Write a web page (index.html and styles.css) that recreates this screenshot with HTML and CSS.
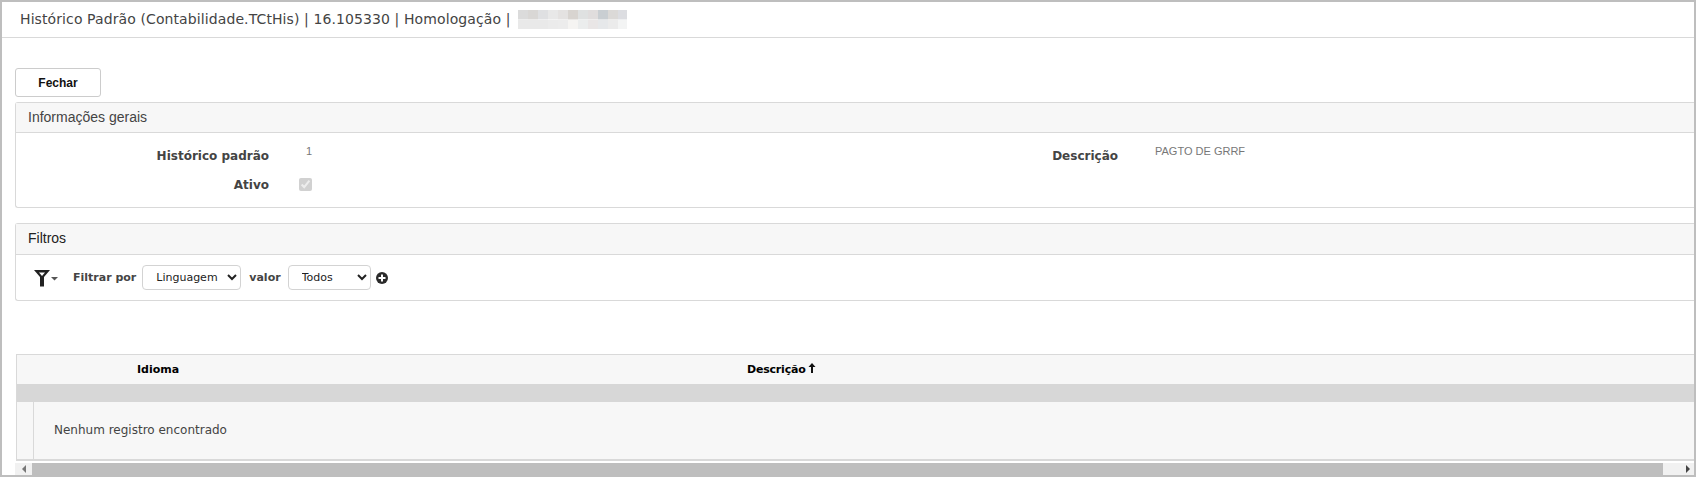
FILE: index.html
```html
<!DOCTYPE html>
<html lang="pt-BR">
<head>
<meta charset="utf-8">
<title>Histórico Padrão</title>
<link rel="stylesheet" href="styles.css">
</head>
<body>
<div class="frame">
  <header class="title-bar">
    <span class="title-text">Histórico Padrão (Contabilidade.TCtHis) | 16.105330 | Homologação |</span>
    <span class="blur" aria-hidden="true"></span>
  </header>
  <div class="actions"><button class="btn" type="button">Fechar</button></div>

  <section class="panel panel-info">
    <h2 class="panel-head">Informações gerais</h2>
    <div class="info-grid">
      <div class="label">Histórico padrão</div>
      <div class="value">1</div>
      <div class="label">Descrição</div>
      <div class="value">PAGTO DE GRRF</div>
      <div class="label label-ativo">Ativo</div>
      <div class="value value-check"><input class="check" type="checkbox" checked disabled></div>
    </div>
  </section>

  <section class="panel panel-filter">
    <h2 class="panel-head panel-head-dark">Filtros</h2>
    <div class="filter-row">
      <svg class="funnel" width="25" height="18" viewBox="0 0 25 18">
        <path d="M0 1h16l-6 7v9.500H6V8z M5 3.500l3 3.500 3-3.500z" fill="#222" fill-rule="evenodd"/>
        <path d="M17 8h7l-3.500 3.500z" fill="#555"/>
      </svg>
      <span class="filter-label">Filtrar por</span>
      <select class="sel sel-lang"><option>Linguagem</option></select>
      <span class="filter-label">valor</span>
      <select class="sel sel-val"><option>Todos</option></select>
      <svg class="plus" width="12" height="12" viewBox="0 0 12 12">
        <circle cx="6" cy="6" r="6" fill="#2b2b2b"/>
        <path d="M5 2.500h2V5h2.500v2H7v2.500H5V7H2.500V5H5z" fill="#fff"/>
      </svg>
    </div>
  </section>

  <section class="grid-table">
    <div class="grid-head">
      <span class="col col-idioma">Idioma</span>
      <span class="col col-desc">Descrição<svg class="arrow" width="8" height="10" viewBox="0 0 8 10"><path d="M3 10V4H0.500L4 0l3.500 4H5v6z" fill="#111"/></svg></span>
    </div>
    <div class="grid-band"></div>
    <div class="grid-row">
      <div class="grid-gutter"></div>
      <div class="grid-empty">Nenhum registro encontrado</div>
    </div>
  </section>

  <div class="hscroll">
    <div class="sb-btn sb-left"><span class="tri tri-left"></span></div>
    <div class="sb-thumb"></div>
    <div class="sb-btn sb-right"><span class="tri tri-right"></span></div>
  </div>
</div>
</body>
</html>
```
FILE: styles.css
```css
* { box-sizing: border-box; }
html, body { margin: 0; padding: 0; background: #fff; }
.frame {
  width: 1696px;
  height: 477px;
  border: 2px solid #bebebe;
  overflow: hidden;
  display: flex;
  flex-direction: column;
  background: #fff;
}
.title-bar {
  height: 36px;
  flex: none;
  border-bottom: 1px solid #d9d9d9;
  display: flex;
  align-items: center;
  padding: 0 0 0 18px;
  gap: 7px;
  font: 14px "DejaVu Sans", sans-serif;
  letter-spacing: 0.1px;
  color: #444;
}
.title-text { white-space: nowrap; position: relative; top: -1px; }
.blur {
  width: 109px;
  height: 19px;
  flex: none;
  background:
    linear-gradient(90deg, #dbdbdb 0 10px, #d9d7d5 10px 20px, #dfe0e2 20px 30px, #e8e8e8 30px 40px, #e4e2e1 40px 50px, #d8d4d0 50px 60px, #dfe1e1 60px 70px, #e0dddd 70px 80px, #c9ced2 80px 90px, #dbd9d7 90px 100px, #dcdde1 100px 109px) top / 100% 50% no-repeat,
    linear-gradient(90deg, #e9e9e9 0 30px, #ebebeb 30px 40px, #ececec 40px 50px, #f5f4f2 50px 60px, #ebeded 60px 70px, #e9e6e6 70px 80px, #e6e8ea 80px 90px, #ebebeb 90px 100px, #f3f4f4 100px 109px) bottom / 100% 50% no-repeat;
}
.actions { padding: 30px 0 0 13px; height: 64px; flex: none; }
.btn {
  display: block;
  width: 86px;
  height: 29px;
  padding: 0;
  background: #fff;
  border: 1px solid #ccc;
  border-radius: 3px;
  font: bold 12px "Liberation Sans", sans-serif;
  color: #111;
}
.panel {
  margin-left: 13px;
  flex: none;
  border: 1px solid #d9d9d9;
  border-right: 0;
  border-radius: 3px 0 0 3px;
}
.panel-info { height: 106px; }
.panel-filter { height: 78px; margin-top: 15px; }
.panel-head {
  margin: 0;
  height: 30px;
  padding: 0 12px;
  background: #f7f7f7;
  border-bottom: 1px solid #d9d9d9;
  font: normal 14px/29px "Liberation Sans", sans-serif;
  color: #444;
}
.panel-head-dark { height: 31px; line-height: 28px; color: #222; }
.info-grid {
  display: grid;
  grid-template-columns: 253px 761px 88px 1fr;
  grid-auto-rows: 30px;
  padding-top: 8px;
}
.label {
  font: bold 12px/30px "DejaVu Sans", sans-serif;
  color: #444;
  text-align: right;
  white-space: nowrap;
}
.label-ativo { line-height: 28px; }
.value {
  font: 11px/16px "Liberation Sans", sans-serif;
  color: #777;
  padding: 2px 0 0 37px;
  white-space: nowrap;
}
.value-check { padding: 7px 0 0 30px; }
.check { display: block; margin: 0; width: 13px; height: 13px; }
.filter-row {
  display: flex;
  align-items: center;
  height: 45px;
  padding: 0 0 0 18px;
}
.funnel { flex: none; margin-right: 14px; }
.filter-label {
  font: bold 11px "DejaVu Sans", sans-serif;
  color: #444;
  white-space: nowrap;
}
.sel {
  height: 25px;
  margin: 0 7px 0 6px;
  padding: 0 0 0 9px;
  background-color: #fff;
  border: 1px solid #d3d3d3;
  border-radius: 4px;
  font: 11px "DejaVu Sans", sans-serif;
  color: #222;
}
.sel-lang { width: 99px; margin-right: 8px; }
.sel-val { width: 83px; margin: 0 5px 0 7px; }
.plus { flex: none; }
.grid-table {
  margin: 53px 0 0 14px;
  flex: none;
  height: 107px;
  border-top: 1px solid #d9d9d9;
  border-left: 1px solid #d9d9d9;
  border-bottom: 2px solid #d9d9d9;
  display: flex;
  flex-direction: column;
}
.grid-head {
  height: 29px;
  flex: none;
  background: #f7f7f7;
  position: relative;
  font: bold 11px/30px "DejaVu Sans", sans-serif;
  color: #000;
}
.col { position: absolute; top: 0; white-space: nowrap; }
.col-idioma { left: 120px; }
.col-desc { left: 730px; letter-spacing: -0.2px; }
.arrow { vertical-align: 0; margin-left: 2px; }
.grid-band { height: 18px; flex: none; background: #d7d7d7; }
.grid-row { flex: 1; display: flex; background: #f7f7f7; }
.grid-gutter { width: 17px; flex: none; border-right: 1px solid #d9d9d9; }
.grid-empty {
  padding-left: 20px;
  font: 12px/56px "DejaVu Sans", sans-serif;
  color: #444;
  white-space: nowrap;
}
.hscroll {
  margin: 2px 0 0 13px;
  height: 12px;
  flex: none;
  display: flex;
  background: #bebebe;
}
.sb-btn {
  flex: none;
  background: #f1f1f1;
  display: flex;
  align-items: center;
}
.sb-left { width: 17px; justify-content: center; }
.sb-right { width: 31px; justify-content: flex-end; padding-right: 4px; }
.sb-thumb { flex: 1; background: #bebebe; }
.tri { width: 0; height: 0; border-top: 4px solid transparent; border-bottom: 4px solid transparent; }
.tri-left { border-right: 4px solid #777; }
.tri-right { border-left: 4px solid #444; }
```
